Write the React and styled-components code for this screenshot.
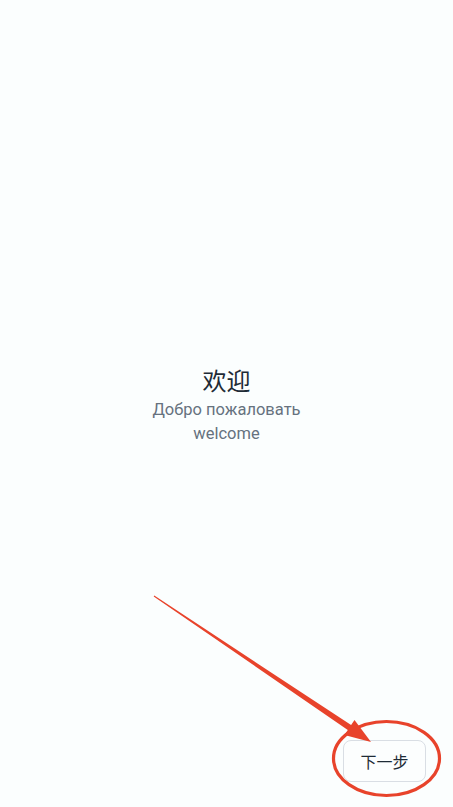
import React from "react";
import styled, { createGlobalStyle } from "styled-components";

const GlobalStyle = createGlobalStyle`
  html, body {
    margin: 0;
    padding: 0;
    background: #fbfefe;
  }
  body {
    font-family: Roboto, "Noto Sans CJK SC", sans-serif;
  }
`;

const Page = styled.div`
  position: relative;
  display: flex;
  flex-direction: column;
  height: 100vh;
  background: #fbfefe;
  overflow: hidden;
`;

const Content = styled.div`
  flex: 1;
  display: flex;
  flex-direction: column;
  align-items: center;
  justify-content: center;
  padding-top: 70px;
`;

const Title = styled.h1`
  margin: 0 0 3px;
  font-family: "Noto Sans CJK SC", sans-serif;
  font-size: 24px;
  font-weight: 400;
  line-height: 30px;
  color: #1e2b36;
`;

const Subtitle = styled.div`
  font-family: Roboto, sans-serif;
  font-size: 16.5px;
  line-height: 24px;
  color: #66727e;
`;

const Footer = styled.div`
  display: flex;
  justify-content: flex-end;
  padding: 0 27px 25px;
`;

const NextButton = styled.button`
  width: 83px;
  height: 42px;
  border: 1px solid #d9dee4;
  border-radius: 8px;
  background: #fcfefe;
  font-family: "Noto Sans CJK SC", sans-serif;
  font-size: 16px;
  color: #1e2b36;
  cursor: pointer;
`;

const Annotation = styled.svg`
  position: absolute;
  inset: 0;
  width: 100%;
  height: 100%;
  pointer-events: none;
`;

// tapered red arrow from (154,596) to (371,742), plus circle round the button
const arrowShape = () => {
  const [x1, y1, x2, y2] = [154, 596, 371, 742];
  const dx = x2 - x1;
  const dy = y2 - y1;
  const len = Math.hypot(dx, dy);
  const ux = dx / len;
  const uy = dy / len;
  const px = -uy;
  const py = ux;
  const headLen = 26;
  const bx = x2 - ux * headLen;
  const by = y2 - uy * headLen;
  const pt = (x, y) => `${x.toFixed(1)},${y.toFixed(1)}`;
  return [
    pt(x1 + px * 0.5, y1 + py * 0.5),
    pt(bx + px * 3, by + py * 3),
    pt(bx + px * 9, by + py * 9),
    pt(x2, y2),
    pt(bx - px * 9, by - py * 9),
    pt(bx - px * 3, by - py * 3),
    pt(x1 - px * 0.5, y1 - py * 0.5),
  ].join(" ");
};

export default function App() {
  return (
    <>
      <GlobalStyle />
      <Page>
        <Content>
          <Title>欢迎</Title>
          <Subtitle>Добро пожаловать</Subtitle>
          <Subtitle>welcome</Subtitle>
        </Content>
        <Footer>
          <NextButton>下一步</NextButton>
        </Footer>
        <Annotation viewBox="0 0 453 807" preserveAspectRatio="none">
          <ellipse cx="386.5" cy="758.5" rx="53" ry="37" fill="none" stroke="#e8432b" strokeWidth="3.2" />
          <polygon points={arrowShape()} fill="#e8432b" />
        </Annotation>
      </Page>
    </>
  );
}
